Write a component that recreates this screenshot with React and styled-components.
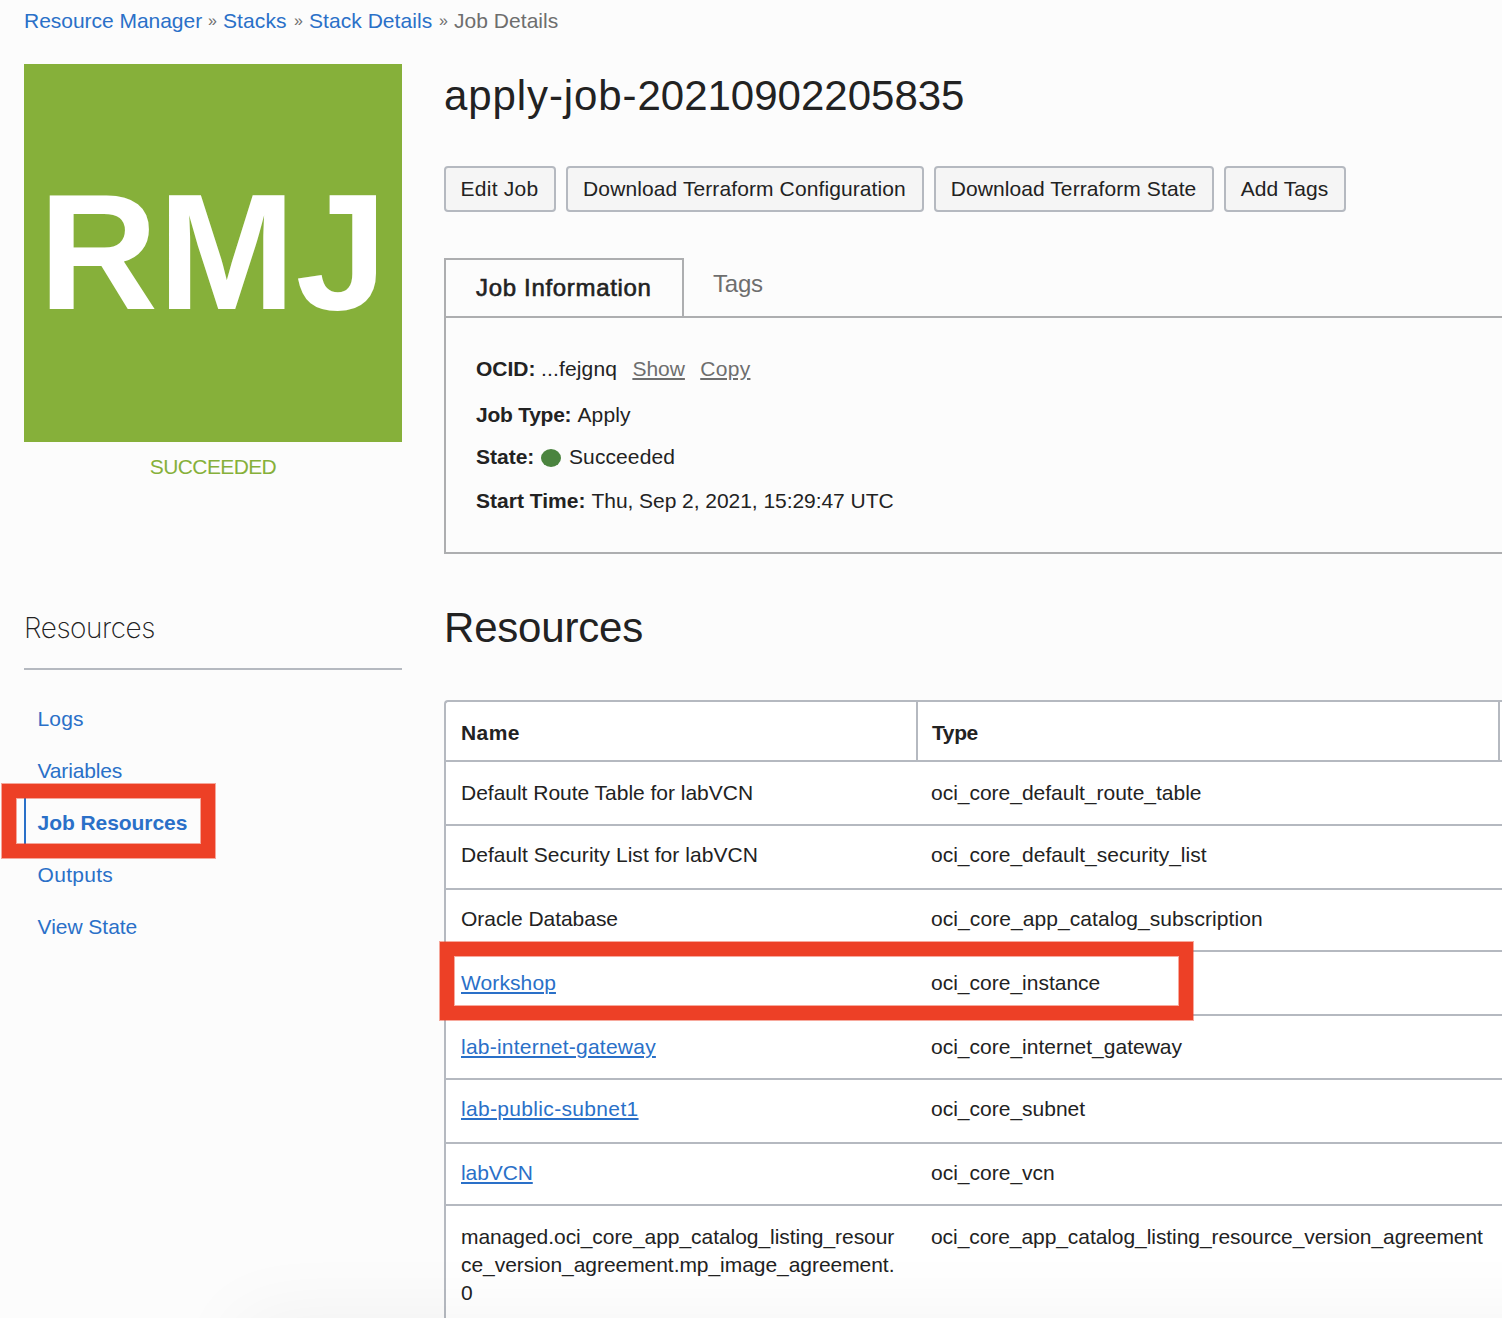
import React from "react";
import styled, { createGlobalStyle, css } from "styled-components";

const color = {
  text: "#222222",
  muted: "#6e6e6e",
  link: "#2a70c8",
  page: "#fcfcfc",
  line: "#b5b9c0",
  tabLine: "#adaeb0",
  tile: "#86b03a",
  dot: "#4b843f",
  mark: "#ed4026",
};

const GlobalStyle = createGlobalStyle`
  * { box-sizing: border-box; }
  body {
    margin: 0;
    overflow: hidden;
    background: ${color.page};
    color: ${color.text};
    font-family: "Liberation Sans", Arial, sans-serif;
    font-size: 21px;
    line-height: 28px;
  }
  h1, h2, h3, ul, dl, dd, ol { margin: 0; padding: 0; }
  a { color: inherit; text-decoration: none; }
`;

const Page = styled.div`
  position: relative;
  height: 1318px;
  overflow: hidden;
  padding-left: 24px;
`;

const Track = styled.span`
  letter-spacing: ${(p) => p.$ls || 0}px;
`;

const Breadcrumbs = styled.nav`
  display: flex;
  height: 64px;
  padding-top: 7px;
  color: ${color.muted};
  white-space: nowrap;
`;

const Crumb = styled.a`
  width: ${(p) => p.$w}px;
  color: ${(p) => (p.$current ? color.muted : color.link)};
  letter-spacing: ${(p) => p.$ls || 0}px;
`;

const Separator = styled.span`
  width: 21px;
  text-align: center;
  font-size: 16px;
`;

const Columns = styled.div`
  display: grid;
  grid-template-columns: 378px 1058px;
  column-gap: 42px;
`;

const Sidebar = styled.aside`
  display: flex;
  flex-direction: column;
`;

const Tile = styled.div`
  height: 378px;
  background: ${color.tile};
  color: #fff;
  font-size: 165px;
  font-weight: 700;
  line-height: 376px;
  text-align: center;
`;

const TileStatus = styled.div`
  padding-top: 11px;
  height: 168px;
  color: ${color.tile};
  text-align: center;
  letter-spacing: -0.62px;
`;

const SidebarTitle = styled.h3`
  height: 60px;
  border-bottom: 2px solid ${color.line};
  font-family: Inter, "Liberation Sans", sans-serif;
  font-size: 28px;
  font-weight: 200;
  line-height: 36px;
  letter-spacing: -0.45px;
`;

const NavList = styled.ul`
  padding-top: 23px;
  list-style: none;
`;

const NavItem = styled.li`
  position: relative;
  height: 52px;
  padding-left: 11.6px;
  border-left: 2px solid ${(p) => (p.$active ? color.link : "transparent")};
  color: ${color.link};
  font-weight: ${(p) => (p.$active ? 700 : 400)};
  line-height: 52px;
  letter-spacing: ${(p) => p.$ls || 0}px;
`;

const highlight = css`
  position: absolute;
  border: 14px solid ${color.mark};
  box-shadow: 0 0 0 1px rgba(237, 64, 38, 0.45), inset 0 0 0 1px rgba(237, 64, 38, 0.45);
  pointer-events: none;
`;

const NavHighlight = styled.span`
  ${highlight}
  left: -24px;
  top: -13px;
  width: 213px;
  height: 74px;
`;

const RowHighlight = styled.span`
  ${highlight}
  left: -6px;
  top: -10px;
  width: 753px;
  height: 78px;
  z-index: 1;
`;

const Main = styled.main`
  display: flex;
  flex-direction: column;
`;

const Title = styled.h1`
  height: 102px;
  padding-top: 8px;
  font-size: 42px;
  font-weight: 400;
  line-height: 48px;
`;

const Actions = styled.div`
  display: flex;
  height: 92px;
`;

const Button = styled.button`
  width: ${(p) => p.$w}px;
  height: 46px;
  margin-right: 10px;
  padding: 0 1px 1px 0;
  border: 2px solid ${color.line};
  border-radius: 4px;
  background: #f5f5f5;
  color: ${color.text};
  font: inherit;
  line-height: 40px;
  white-space: nowrap;
  letter-spacing: ${(p) => p.$ls}px;
`;

const Tabs = styled.div`
  display: flex;
  height: 58px;
  font-size: 24px;
`;

const ActiveTab = styled.div`
  width: 240px;
  padding: 14px 0 0 30px;
  border: 2px solid ${color.tabLine};
  border-bottom: 0;
  letter-spacing: 0.68px;
  -webkit-text-stroke: 0.6px ${color.text};
`;

const Tab = styled.div`
  padding: 12px 0 0 29px;
  color: ${color.muted};
  letter-spacing: -0.2px;
`;

const Panel = styled.dl`
  height: 238px;
  padding: 37px 0 0 30px;
  border: 2px solid ${color.tabLine};
  border-right: 0;
`;

const Field = styled.div`
  display: flex;
  height: ${(p) => p.$h}px;
  white-space: nowrap;
`;

const Label = styled.dt`
  width: ${(p) => p.$w}px;
  font-weight: 700;
  letter-spacing: ${(p) => p.$ls || 0}px;
`;

const Value = styled.dd`
  display: flex;
  letter-spacing: ${(p) => p.$ls || 0}px;
`;

const StatusDot = styled.span`
  width: 20px;
  height: 18px;
  margin: 6px 8px 0 0;
  border-radius: 50%;
  background: ${color.dot};
`;

const underline = css`
  text-decoration: underline 2px;
  text-underline-offset: 2px;
`;

const MutedLink = styled.a`
  ${underline}
  margin-left: 15.3px;
  color: ${color.muted};
  letter-spacing: ${(p) => p.$ls || 0}px;
`;

const SectionTitle = styled.h2`
  height: 146px;
  padding-top: 50px;
  font-size: 42px;
  font-weight: 400;
  line-height: 48px;
  letter-spacing: -0.2px;
`;

const Table = styled.div`
  border: 2px solid ${color.line};
  border-right: 0;
  border-bottom: 0;
  border-top-left-radius: 4px;
  background: #fff;
`;

const Row = styled.div`
  position: relative;
  display: grid;
  grid-template-columns: 470px 584px;
  height: ${(p) => p.$h}px;
  border-bottom: 2px solid ${color.line};
`;

const HeadCell = styled.div`
  padding: 17px 0 0 ${(p) => p.$pad}px;
  border-right: 2px solid ${color.line};
  font-weight: 700;
  letter-spacing: ${(p) => p.$ls}px;

  &:first-child { width: 472px; }
  &:nth-child(2) { margin-left: 2px; }
`;

const Cell = styled.div`
  padding: ${(p) => p.$top}px 15px 0 15px;
  word-break: break-all;
  letter-spacing: ${(p) => p.$ls || 0}px;
`;

const RowLink = styled.a`
  ${underline}
  color: ${color.link};
`;

const BottomShade = styled.div`
  position: absolute;
  left: 240px;
  right: -100px;
  top: 1318px;
  height: 100px;
  box-shadow: 0 0 80px rgba(0, 0, 0, 0.05);
  z-index: 2;
`;

const navItems = [
  { label: "Logs", ls: 0.1 },
  { label: "Variables", ls: -0.18 },
  { label: "Job Resources", ls: -0.07, active: true },
  { label: "Outputs", ls: 0.28 },
  { label: "View State", ls: -0.04 },
];

const rows = [
  { name: "Default Route Table for labVCN", type: "oci_core_default_route_table", h: 64, top: 17, nls: -0.018, tls: -0.015 },
  { name: "Default Security List for labVCN", type: "oci_core_default_security_list", h: 64, top: 15, nls: 0.05 },
  { name: "Oracle Database", type: "oci_core_app_catalog_subscription", h: 62, top: 15, nls: -0.04, tls: 0.077 },
  { name: "Workshop", type: "oci_core_instance", h: 64, top: 17, link: true, marked: true, nls: 0.1 },
  { name: "lab-internet-gateway", type: "oci_core_internet_gateway", h: 64, top: 17, link: true, nls: 0.23 },
  { name: "lab-public-subnet1", type: "oci_core_subnet", h: 64, top: 15, link: true, nls: 0.33 },
  { name: "labVCN", type: "oci_core_vcn", h: 62, top: 15, link: true, nls: -0.1 },
  {
    name: "managed.oci_core_app_catalog_listing_resource_version_agreement.mp_image_agreement.0",
    type: "oci_core_app_catalog_listing_resource_version_agreement",
    h: 130,
    top: 17,
    nls: -0.05,
    tls: -0.07,
  },
];

export default function App() {
  return (
    <Page>
      <GlobalStyle />
      <Breadcrumbs>
        <Crumb $w={178} $ls={-0.03}>Resource Manager</Crumb>
        <Separator>»</Separator>
        <Crumb $w={65} $ls={0.1}>Stacks</Crumb>
        <Separator>»</Separator>
        <Crumb $w={124} $ls={0.05}>Stack Details</Crumb>
        <Separator>»</Separator>
        <Crumb $w={110} $ls={0.04} $current>Job Details</Crumb>
      </Breadcrumbs>
      <Columns>
        <Sidebar>
          <Tile>RMJ</Tile>
          <TileStatus>SUCCEEDED</TileStatus>
          <SidebarTitle>Resources</SidebarTitle>
          <NavList>
            {navItems.map((item) => (
              <NavItem key={item.label} $active={item.active} $ls={item.ls}>
                <a>{item.label}</a>
                {item.active && <NavHighlight />}
              </NavItem>
            ))}
          </NavList>
        </Sidebar>
        <Main>
          <Title>
            <Track $ls={0.9}>apply-job-</Track>20210902205835
          </Title>
          <Actions>
            <Button $w={112} $ls={0.25}>Edit Job</Button>
            <Button $w={358} $ls={0.105}>Download Terraform Configuration</Button>
            <Button $w={280} $ls={0.09}>Download Terraform State</Button>
            <Button $w={122} $ls={0.04}>Add Tags</Button>
          </Actions>
          <Tabs>
            <ActiveTab>Job Information</ActiveTab>
            <Tab>Tags</Tab>
          </Tabs>
          <Panel>
            <Field $h={46}>
              <Label $w={65}>OCID:</Label>
              <Value>
                <Track $ls={0.15}>...fejgnq</Track>
                <MutedLink>Show</MutedLink>
                <MutedLink $ls={0.3}>Copy</MutedLink>
              </Value>
            </Field>
            <Field $h={42}>
              <Label $w={101.5} $ls={-0.25}>Job Type:</Label>
              <Value $ls={0.1}>Apply</Value>
            </Field>
            <Field $h={44}>
              <Label $w={65}>State:</Label>
              <Value $ls={0.1}>
                <StatusDot />
                Succeeded
              </Value>
            </Field>
            <Field $h={44}>
              <Label $w={115.5} $ls={0.02}>Start Time:</Label>
              <Value $ls={-0.05}>Thu, Sep 2, 2021, 15:29:47 UTC</Value>
            </Field>
          </Panel>
          <SectionTitle>Resources</SectionTitle>
          <Table>
            <Row $h={60}>
              <HeadCell $pad={15} $ls={0.4}>Name</HeadCell>
              <HeadCell $pad={14} $ls={-0.4}>Type</HeadCell>
            </Row>
            {rows.map((row) => (
              <Row key={row.name} $h={row.h}>
                <Cell $top={row.top} $ls={row.nls}>
                  {row.link ? <RowLink>{row.name}</RowLink> : row.name}
                </Cell>
                <Cell $top={row.top} $ls={row.tls}>{row.type}</Cell>
                {row.marked && <RowHighlight />}
              </Row>
            ))}
          </Table>
        </Main>
      </Columns>
      <BottomShade />
    </Page>
  );
}
